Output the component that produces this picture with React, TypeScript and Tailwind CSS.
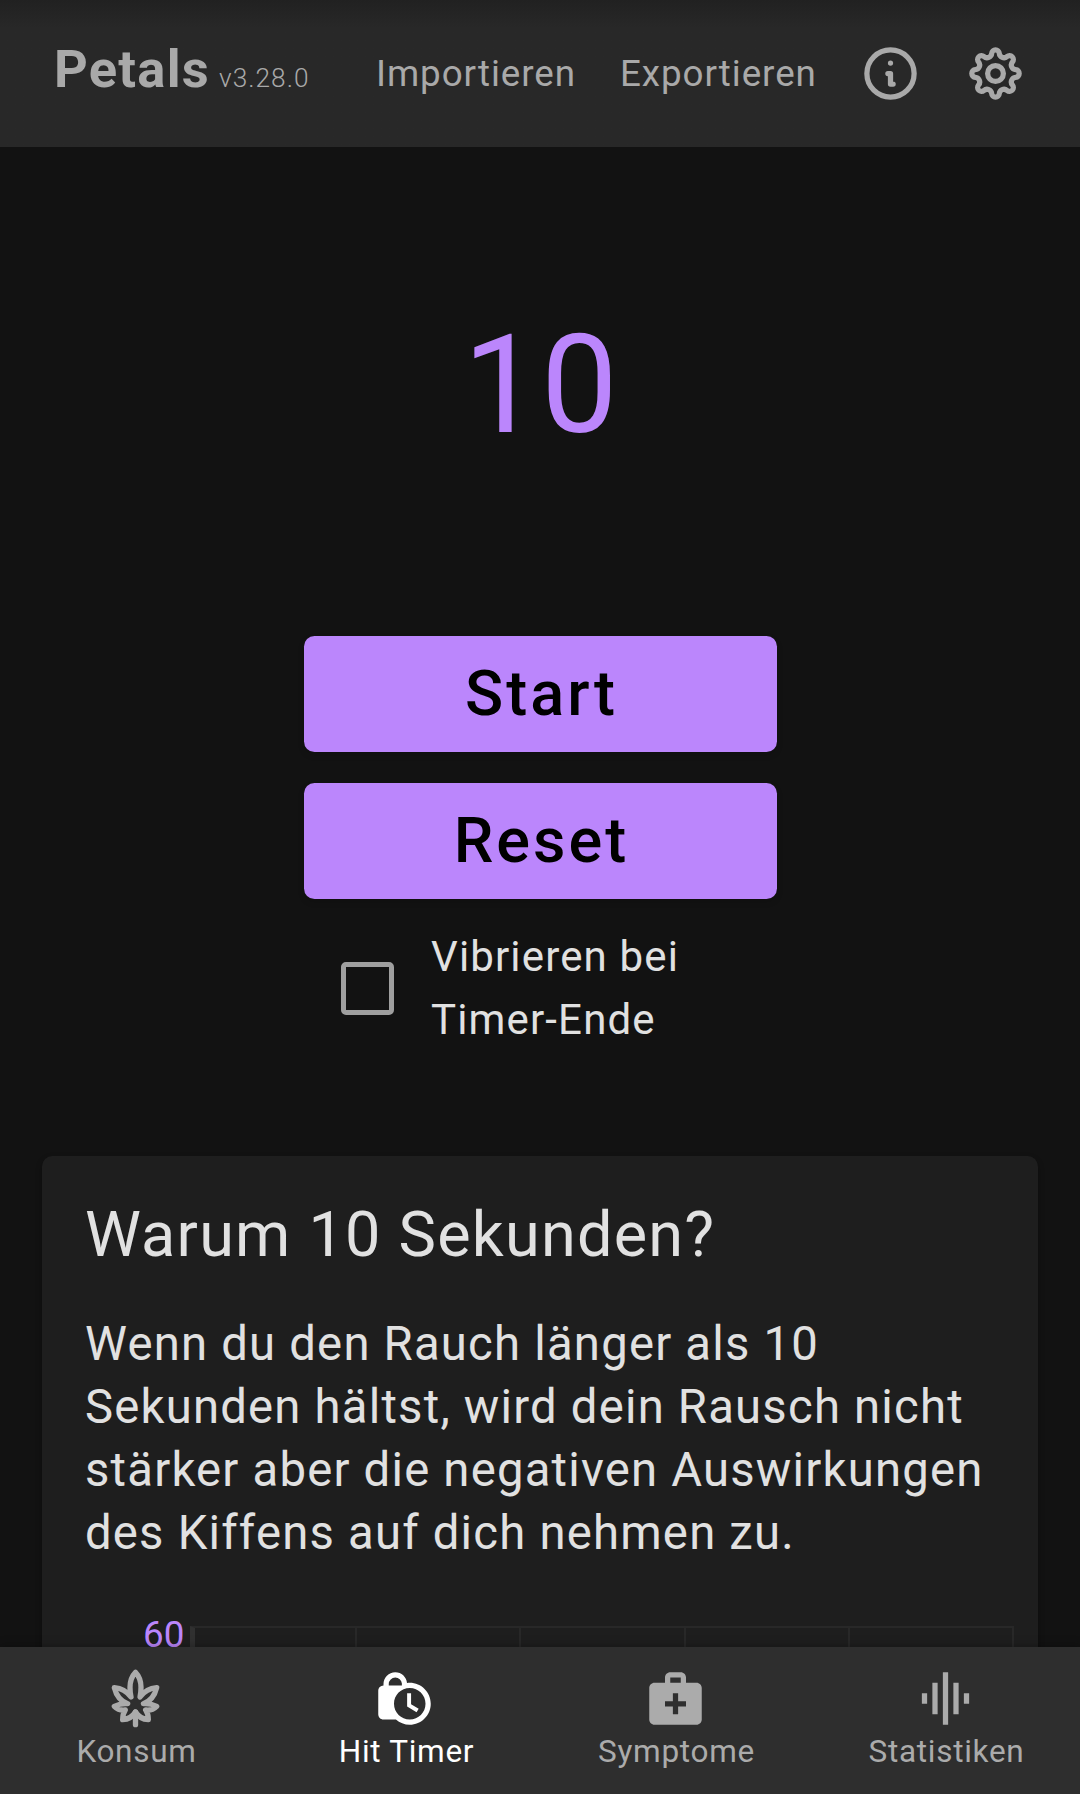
import type { ReactNode } from "react";
import { MdGraphicEq, MdLockClock, MdMedicalServices } from "react-icons/md";

function polar(radius: number, degrees: number) {
  const a = (degrees * Math.PI) / 180;
  return `${(12 + radius * Math.sin(a)).toFixed(3)} ${(12 - radius * Math.cos(a)).toFixed(3)}`;
}

// Eight round lobes joined by round valleys.
const gearPath =
  `M${polar(7.818, -10.66)}` +
  Array.from({ length: 8 }, (_, k) => {
    const a = k * 45;
    return `A1.45 1.45 0 0 1 ${polar(7.818, a + 10.66)}A1.8 1.8 0 0 0 ${polar(7.818, a + 34.34)}`;
  }).join("") +
  "Z";

function GearIcon() {
  return (
    <svg viewBox="0 0 24 24" className="size-[63px]" fill="none" stroke="currentColor" strokeWidth="2" strokeLinejoin="round">
      <path d={gearPath} />
      <circle cx="12" cy="12" r="3" />
    </svg>
  );
}

function InfoIcon() {
  return (
    <svg viewBox="0 0 24 24" className="size-[63px]" fill="none" stroke="currentColor" strokeWidth="2">
      <circle cx="12" cy="12" r="9" />
      <circle cx="12" cy="8" r="1" fill="currentColor" stroke="none" />
      <path d="M11 12h1v4h1" strokeLinecap="round" strokeLinejoin="round" />
    </svg>
  );
}

function LeafIcon() {
  return (
    <svg viewBox="72 81 189 189" className="size-[63px]" fill="none" stroke="currentColor" strokeWidth="16" strokeLinejoin="round" strokeLinecap="round">
      <path d="M166.500 97C154 110 150 128 150 142C150 156 151 164 153 171C142 156 126 145 103 143C109 168 122 184 143 191C128 190 115 193 103 199C113 209 124 212 136 210C131 217 128 226 128 239C145 238 158 230 166.500 216C175 230 188 238 205 239C205 226 202 217 197 210C209 212 220 209 230 199C218 193 205 190 190 191C211 184 224 168 230 143C207 145 191 156 180 171C182 164 183 156 183 142C183 128 179 110 166.500 97Z" />
      <path d="M166.500 216V254" />
    </svg>
  );
}

function NavItem({ label, active, children }: { label: string; active?: boolean; children: ReactNode }) {
  return (
    <a className={`flex flex-1 flex-col items-center pt-5 ${active ? "text-white" : "text-[#ababab]"}`}>
      {children}
      <span className="mt-[3px] pl-[3px] text-[31.5px] leading-[37px] tracking-[0.7px]">{label}</span>
    </a>
  );
}

function TimerButton({ children }: { children: ReactNode }) {
  return (
    <button className="h-[116px] w-[473px] rounded-[10.5px] bg-[#bb86fc] pl-[3px] text-[63px] leading-[74px] font-medium tracking-[3px] text-black shadow-[0_3px_6px_rgba(0,0,0,0.15)]">
      {children}
    </button>
  );
}

export default function App() {
  return (
    <div className="flex h-[1794px] w-[1080px] flex-col overflow-hidden bg-[#121212] font-[Roboto,sans-serif] text-[#e1e1e1]">
      <header className="flex h-[147px] shrink-0 items-center bg-linear-to-b from-[#212121] to-[#282828] to-[28px] pl-[54px] text-[#a9a9a9]">
        <div className="flex w-[322px] items-baseline pb-[9px]">
          <h1 className="text-[52.5px] leading-[62px] font-bold tracking-[1.25px]">Petals</h1>
          <span className="ml-[9px] text-[26.25px] font-light tracking-[1px]">v3.28.0</span>
        </div>
        <span className="w-[244px] text-[36.75px] tracking-[0.95px]">Importieren</span>
        <span className="w-[239px] text-[36.75px] tracking-[0.95px]">Exportieren</span>
        <div className="flex gap-[42px]">
          <InfoIcon />
          <GearIcon />
        </div>
      </header>

      <main className="flex min-h-0 flex-1 flex-col items-center overflow-hidden">
        <div className="mt-[158px] pl-[2px] text-[136.5px] leading-[160px] tracking-[1.3px] text-[#bb86fc]">10</div>
        <div className="mt-[171px] flex flex-col gap-[31px]">
          <TimerButton>Start</TimerButton>
          <TimerButton>Reset</TimerButton>
        </div>
        <label className="mt-[26px] flex w-[473px] items-center pl-[37px]">
          <span className="size-[53px] shrink-0 rounded-[5px] border-[5px] border-[#9f9f9f]" />
          <span className="ml-[37.5px] text-[42px] leading-[63px] tracking-[1.15px]">
            Vibrieren bei
            <br />
            Timer-Ende
          </span>
        </label>

        <section className="mt-[105px] w-[996px] shrink-0 rounded-t-[10.5px] bg-[#1e1e1e] pt-[42px] shadow-[0_3px_6px_rgba(0,0,0,0.3)]">
          <h2 className="px-[43px] text-[63px] leading-[74px] tracking-[1.22px]">Warum 10 Sekunden?</h2>
          <p className="mt-[41px] px-[43px] text-[47.25px] leading-[63px] tracking-[1.21px] whitespace-nowrap">
            Wenn du den Rauch länger als 10
            <br />
            Sekunden hältst, wird dein Rausch nicht
            <br />
            stärker aber die negativen Auswirkungen
            <br />
            des Kiffens auf dich nehmen zu.
          </p>
          <div className="mt-[48px] flex pl-[101px]">
            <span className="w-[47px] text-[36.75px] leading-[43px] text-[#bb86fc]">60</span>
            <div className="mt-[13px] grid h-[80px] w-[824px] grid-cols-[162px_repeat(4,1fr)] border-t-2 border-l-[5px] border-t-[#282828] border-l-[#303030]">
              {[0, 1, 2, 3, 4].map((n) => (
                <div key={n} className="border-r-2 border-[#282828]" />
              ))}
            </div>
          </div>
        </section>
      </main>

      <nav className="relative flex h-[147px] shrink-0 bg-[#2e2e2e] shadow-[0_0_10px_rgba(0,0,0,0.35)]">
        <NavItem label="Konsum">
          <LeafIcon />
        </NavItem>
        <NavItem label="Hit Timer" active>
          <MdLockClock className="-ml-[2px] size-[63px]" />
        </NavItem>
        <NavItem label="Symptome">
          <MdMedicalServices className="size-[63px]" />
        </NavItem>
        <NavItem label="Statistiken">
          <MdGraphicEq className="size-[63px]" />
        </NavItem>
      </nav>
    </div>
  );
}
